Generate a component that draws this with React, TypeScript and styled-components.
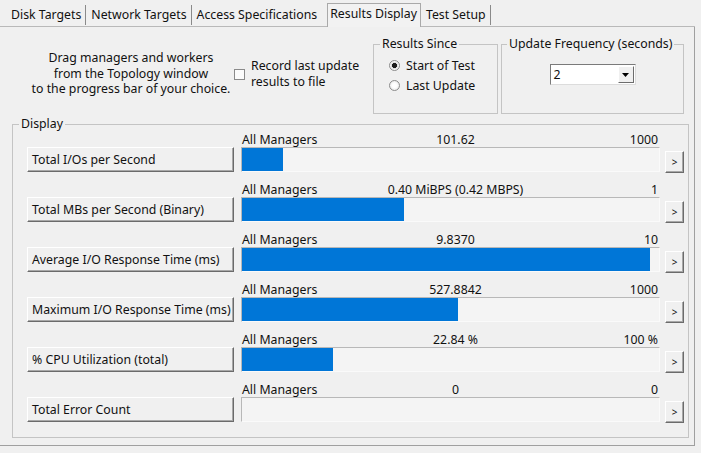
import React from "react";
import styled, { createGlobalStyle } from "styled-components";

const Global = createGlobalStyle`
  html, body { margin: 0; padding: 0; background: #f0f0f0; }
  * { box-sizing: border-box; }
`;

const FONT = `"Noto Sans", "Open Sans", "Liberation Sans", sans-serif`;

const Root = styled.div`
  width: 701px;
  height: 453px;
  overflow: hidden;
  background: #f0f0f0;
  font-family: ${FONT};
  font-size: 12.3px;
  color: #111;
`;

const TabStrip = styled.div`
  width: 695px;
  height: 27px;
  display: flex;
  align-items: flex-end;
  padding-left: 6px;
  border-bottom: 1px solid #b9b9b9;
`;

const Tab = styled.div<{ $selected?: boolean; $noDivider?: boolean }>`
  height: ${(p) => (p.$selected ? "24px" : "20px")};
  margin-bottom: ${(p) => (p.$selected ? "-1px" : "1px")};
  line-height: ${(p) => (p.$selected ? "19px" : "20px")};
  padding: ${(p) => (p.$selected ? "0 3px 0 2px" : p.$noDivider ? "0 10px 0 5px" : "0 4px 0 5px")};
  white-space: nowrap;
  background: #f0f0f0;
  border-right: ${(p) => (p.$noDivider && !p.$selected ? "none" : "1px solid #8a8a8a")};
  ${(p) =>
    p.$selected &&
    `
    border: 1px solid #a9a9a9;
    border-bottom: none;
    background: #f2f2f2;
  `}
`;

const Page = styled.div`
  width: 695px;
  height: 419px;
  border-right: 1px solid #a0a0a0;
  border-bottom: 1px solid #a0a0a0;
  display: flex;
  flex-direction: column;
`;

const TopRow = styled.div`
  height: 89px;
  display: flex;
  align-items: flex-start;
  padding: 9px 0 0 28px;
`;

const Instructions = styled.div`
  width: 206px;
  margin-top: 14px;
  text-align: center;
  line-height: 15.5px;
  white-space: nowrap;
`;

const CheckOption = styled.label`
  width: 139px;
  margin-top: 22px;
  display: flex;
  align-items: center;
  gap: 6px;
  line-height: 16px;
`;

const CheckBox = styled.span`
  width: 11px;
  height: 11px;
  flex: none;
  border: 1px solid #8a8a8a;
  background: #fbfbfb;
  margin-top: 1px;
`;

const Group = styled.fieldset<{ $width: number; $height?: number; $gap?: number }>`
  width: ${(p) => p.$width}px;
  ${(p) => (p.$height ? `height: ${p.$height}px;` : "")}
  margin: 0 0 0 ${(p) => p.$gap ?? 0}px;
  padding: 0;
  min-width: 0;
  border: 1px solid #c4c4c4;
`;

const Legend = styled.legend<{ $offset: number }>`
  margin-left: ${(p) => p.$offset}px;
  padding: 0 2px;
  line-height: 16px;
  height: 16px;
`;

const RadioList = styled.div`
  padding: 3px 0 0 15px;
  display: flex;
  flex-direction: column;
`;

const RadioRow = styled.label`
  height: 20px;
  display: flex;
  align-items: center;
  gap: 6px;
`;

const Radio = styled.span<{ $checked?: boolean }>`
  width: 11px;
  height: 11px;
  flex: none;
  border-radius: 50%;
  border: 1px solid #8c8c8c;
  background: ${(p) =>
    p.$checked
      ? "radial-gradient(circle, #1c1c1c 0 2.3px, #d8d8d8 2.8px, #f6f6f6 4px)"
      : "radial-gradient(circle, #ffffff 0 2px, #e9e9e9 5px)"};
`;

const FreqBody = styled.div`
  display: flex;
  justify-content: center;
  padding-top: 12px;
`;

const Combo = styled.div`
  width: 86px;
  height: 21px;
  background: #fff;
  border-top: 1px solid #7a7a7a;
  border-left: 1px solid #7a7a7a;
  border-right: 1px solid #dcdcdc;
  border-bottom: 1px solid #dcdcdc;
  display: flex;
  align-items: center;
  justify-content: space-between;
  padding: 1px 1px 1px 3px;
`;

const ComboArrow = styled.span`
  width: 16px;
  height: 17px;
  background: #f0f0f0;
  border-top: 1px solid #fff;
  border-left: 1px solid #fff;
  border-right: 1px solid #6d6d6d;
  border-bottom: 1px solid #6d6d6d;
  display: flex;
  align-items: center;
  justify-content: center;
`;

const Display = styled.fieldset`
  margin: 0 5px 0 12px;
  padding: 0;
  min-width: 0;
  border: 1px solid #c4c4c4;
`;

const Rows = styled.div`
  padding: 0 5px 15px 14px;
  display: flex;
  flex-direction: column;
  gap: 10px;
`;

const Metric = styled.div`
  display: grid;
  grid-template-columns: 207px 7px 419px 5px 19px;
  grid-template-rows: 15px 25px;
`;

const CaptionLine = styled.div`
  grid-column: 3;
  grid-row: 1;
  display: grid;
  grid-template-columns: 131px 1fr 120px;
  line-height: 15px;
  white-space: nowrap;
  padding: 0 2px 0 1px;
`;

const Caption = styled.span<{ $align: "left" | "center" | "right" }>`
  text-align: ${(p) => p.$align};
`;

const raised = `
  background: #f0f0f0;
  border-top: 1px solid #ffffff;
  border-left: 1px solid #ffffff;
  border-right: 1px solid #6b6b6b;
  border-bottom: 1px solid #6b6b6b;
  box-shadow: inset -1px -1px 0 #a8a8a8;
`;

const MetricButton = styled.div`
  grid-column: 1;
  grid-row: 2;
  height: 25px;
  ${raised}
  padding-left: 4px;
  display: flex;
  align-items: center;
  white-space: nowrap;
  overflow: hidden;
`;

const Bar = styled.div`
  grid-column: 3;
  grid-row: 2;
  height: 25px;
  border-top: 1px solid #b8b8b8;
  border-left: 1px solid #b8b8b8;
  border-right: 1px solid #fafafa;
  border-bottom: 1px solid #fafafa;
  background: #f4f4f4;
  display: flex;
`;

const Fill = styled.div`
  height: 100%;
  background: #0076d7;
`;

const MoreButton = styled.div`
  grid-column: 5;
  grid-row: 2;
  align-self: end;
  height: 22px;
  margin-bottom: -1px;
  ${raised}
  display: flex;
  align-items: center;
  justify-content: center;
  font-size: 10px;
  line-height: 1;
  padding-bottom: 1px;
`;

type Row = { name: string; value: string; max: string; fill: number };

const rows: Row[] = [
  { name: "Total I/Os per Second", value: "101.62", max: "1000", fill: 41 / 417 },
  { name: "Total MBs per Second (Binary)", value: "0.40 MiBPS (0.42 MBPS)", max: "1", fill: 162 / 417 },
  { name: "Average I/O Response Time (ms)", value: "9.8370", max: "10", fill: 408 / 417 },
  { name: "Maximum I/O Response Time (ms)", value: "527.8842", max: "1000", fill: 216 / 417 },
  { name: "% CPU Utilization (total)", value: "22.84 %", max: "100 %", fill: 91 / 417 },
  { name: "Total Error Count", value: "0", max: "0", fill: 0 },
];

export default function App() {
  return (
    <Root>
      <Global />
      <TabStrip>
        <Tab>Disk Targets</Tab>
        <Tab>Network Targets</Tab>
        <Tab $noDivider>Access Specifications</Tab>
        <Tab $selected>Results Display</Tab>
        <Tab>Test Setup</Tab>
      </TabStrip>
      <Page>
        <TopRow>
          <Instructions>
            Drag managers and workers
            <br />
            from the Topology window
            <br />
            to the progress bar of your choice.
          </Instructions>
          <CheckOption>
            <CheckBox />
            <span>
              Record last update
              <br />
              results to file
            </span>
          </CheckOption>
          <Group $width={125} $height={78}>
            <Legend $offset={6}>Results Since</Legend>
            <RadioList>
              <RadioRow>
                <Radio $checked />
                Start of Test
              </RadioRow>
              <RadioRow>
                <Radio />
                Last Update
              </RadioRow>
            </RadioList>
          </Group>
          <Group $width={183} $height={78} $gap={3}>
            <Legend $offset={5}>Update Frequency (seconds)</Legend>
            <FreqBody>
              <Combo>
                <span>2</span>
                <ComboArrow>
                  <svg width="7" height="4" viewBox="0 0 7 4">
                    <path d="M0 0H7L3.5 4Z" fill="#000" />
                  </svg>
                </ComboArrow>
              </Combo>
            </FreqBody>
          </Group>
        </TopRow>
        <Display>
          <Legend $offset={6}>Display</Legend>
          <Rows>
            {rows.map((r) => (
              <Metric key={r.name}>
                <CaptionLine>
                  <Caption $align="left">All Managers</Caption>
                  <Caption $align="center">{r.value}</Caption>
                  <Caption $align="right">{r.max}</Caption>
                </CaptionLine>
                <MetricButton>{r.name}</MetricButton>
                <Bar>
                  <Fill style={{ width: `${r.fill * 100}%` }} />
                </Bar>
                <MoreButton>&gt;</MoreButton>
              </Metric>
            ))}
          </Rows>
        </Display>
      </Page>
    </Root>
  );
}
